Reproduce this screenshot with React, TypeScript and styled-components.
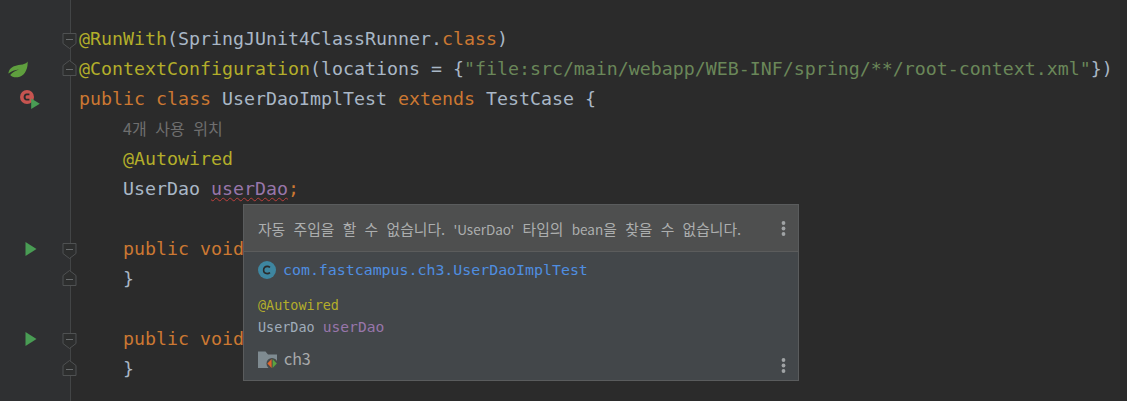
import React from "react";
import styled, { createGlobalStyle } from "styled-components";

const GlobalStyle = createGlobalStyle`
  html, body {
    margin: 0;
    padding: 0;
    background: #2b2b2b;
  }
`;

const MONO = `"DejaVu Sans Mono", "Noto Sans CJK KR", monospace`;
const SANS = `"Noto Sans CJK KR", "Noto Sans", sans-serif`;

const FoldMark = ({ end }: { end?: boolean }) => (
  <FoldIcon width="15" height="18" viewBox="0 0 15 18">
    <path
      d={end ? "M1 16.5V6.5L7.5 1.5L14 6.5V16.5Z" : "M1 1.5H14V11.5L7.5 16.5L1 11.5Z"}
      fill="#2d2e2e"
      stroke="#4f5152"
      strokeWidth="1"
    />
    <path d={end ? "M4 10.5H11" : "M4 7.5H11"} stroke="#686b6d" strokeWidth="1" />
  </FoldIcon>
);

const RunIcon = () => (
  <svg width="12" height="16" viewBox="0 0 12 16">
    <path d="M0.5 1V15L11.5 8Z" fill="#499c54" />
  </svg>
);

const SpringLeaf = () => (
  <svg width="20" height="17" viewBox="0 0 20 17">
    <path
      d="M19.6 0.4C18.2 2.6 15.6 3.4 12.4 3.8C7.4 4.4 2.6 5.8 0.8 10.4C0.5 11.2 0.4 12 0.5 12.6C3.4 10.4 7 9 11 8.6C7.4 10 4.2 11.6 2.2 14C3.6 15.8 6.6 16.6 9.8 16.2C16 15.4 20.2 8.6 19.6 0.4Z"
      fill="#5f9f3e"
    />
  </svg>
);

const ErrorClassIcon = () => (
  <svg width="20" height="19" viewBox="0 0 20 19">
    <circle cx="7" cy="7" r="7" fill="#c75450" />
    <path d="M9.4 3.4H6.6C4.8 3.4 3.6 5 3.6 7C3.6 9 4.8 10.6 6.6 10.6H9.4V8.8H6.8C6 8.8 5.6 8 5.6 7C5.6 6 6 5.2 6.8 5.2H9.4Z" fill="#2b2b2b" />
    <path d="M11.2 8.6V19L19.8 13.8Z" fill="#499c54" />
  </svg>
);

const KebabIcon = () => (
  <svg width="5" height="15" viewBox="0 0 5 15">
    <circle cx="2.5" cy="2" r="1.9" fill="#a0a3a5" />
    <circle cx="2.5" cy="7.5" r="1.9" fill="#a0a3a5" />
    <circle cx="2.5" cy="13" r="1.9" fill="#a0a3a5" />
  </svg>
);

const ClassBadge = () => (
  <svg width="18" height="18" viewBox="0 0 18 18">
    <circle cx="9" cy="9" r="9" fill="#3e86a0" />
    <path d="M12 6.4C11.2 5.7 10.3 5.4 9.2 5.4C7 5.4 5.6 6.9 5.6 9C5.6 11.1 7 12.6 9.2 12.6C10.3 12.6 11.2 12.3 12 11.6" fill="none" stroke="#2b2b2b" strokeWidth="1.6" />
  </svg>
);

const ModuleFolder = () => (
  <FolderIcon width="20" height="18" viewBox="0 0 20 18">
    <path d="M0 0.5H7.5L10 3.5H19V14H12V17H0Z" fill="#7f8b91" />
    <circle cx="14" cy="12.5" r="5.5" fill="#45494a" />
    <path d="M13.6 8V17L9.4 12.5Z" fill="#e0642a" />
    <path d="M14.6 8V17L18.8 12.5Z" fill="#5ca33f" />
  </FolderIcon>
);

type LineProps = {
  indent?: number;
  icon?: React.ReactNode;
  iconLeft?: number;
  fold?: "start" | "end";
  children?: React.ReactNode;
};

const Line = ({ indent = 0, icon, iconLeft = 0, fold, children }: LineProps) => (
  <Row>
    <Gutter $left={iconLeft}>
      {icon}
      {fold && (
        <FoldSlot $end={fold === "end"}>
          <FoldMark end={fold === "end"} />
        </FoldSlot>
      )}
    </Gutter>
    <Code $indent={indent}>{children}</Code>
  </Row>
);

const App = () => {
  return (
    <>
      <GlobalStyle />
      <Page>
        <Line fold="start">
          <Annotation>@RunWith</Annotation>(SpringJUnit4ClassRunner.<Keyword>class</Keyword>)
        </Line>
        <Line fold="end" icon={<SpringLeaf />} iconLeft={8}>
          <Annotation>@ContextConfiguration</Annotation>(locations = {"{"}
          <Str>"file:src/main/webapp/WEB-INF/spring/**/root-context.xml"</Str>
          {"})"}
        </Line>
        <Line icon={<ErrorClassIcon />} iconLeft={20}>
          <Keyword>public class</Keyword> UserDaoImplTest <Keyword>extends</Keyword> TestCase {"{"}
        </Line>
        <Line indent={44}>
          <Hint>4개 사용 위치</Hint>
        </Line>
        <Line indent={44}>
          <Annotation>@Autowired</Annotation>
        </Line>
        <Line indent={44}>
          UserDao <ErrorField>userDao</ErrorField>
          <Keyword>;</Keyword>
        </Line>
        <Line />
        <Line indent={44} fold="start" icon={<RunIcon />} iconLeft={25}>
          <Keyword>public void</Keyword>
        </Line>
        <Line indent={44} fold="end">
          {"}"}
        </Line>
        <Line />
        <Line indent={44} fold="start" icon={<RunIcon />} iconLeft={25}>
          <Keyword>public void</Keyword>
        </Line>
        <Line indent={44} fold="end">
          {"}"}
        </Line>

        <Popup>
          <PopupHeader>
            <Message>
              자동 주입을 할 수 없습니다. <Latin>'UserDao'</Latin> 타입의 <Latin>bean</Latin>을 찾을 수 없습니다.
            </Message>
            <KebabIcon />
          </PopupHeader>
          <PopupBody>
            <ClassRow>
              <ClassBadge />
              <ClassLink>com.fastcampus.ch3.UserDaoImplTest</ClassLink>
            </ClassRow>
            <Declaration>
              <Annotation>@Autowired</Annotation>
              <DeclarationLine>
                UserDao <Field>userDao</Field>
              </DeclarationLine>
            </Declaration>
            <ModuleRow>
              <ModuleFolder />
              <ModuleName>ch3</ModuleName>
              <KebabSlot>
                <KebabIcon />
              </KebabSlot>
            </ModuleRow>
          </PopupBody>
        </Popup>
      </Page>
    </>
  );
};

const Page = styled.div`
  position: relative;
  width: 1127px;
  height: 401px;
  overflow: hidden;
  padding-top: 24px;
  box-sizing: border-box;
  background: linear-gradient(
    to right,
    #2f3032 70px,
    #434546 70px,
    #434546 71px,
    #2b2b2b 71px
  );
  font-family: ${MONO};
  font-size: 18.27px;
  color: #a9b7c6;
`;

const Row = styled.div`
  display: flex;
  height: 30px;
  line-height: 30px;
  white-space: pre;
`;

const Gutter = styled.div<{ $left: number }>`
  position: relative;
  flex: none;
  display: flex;
  align-items: center;
  width: 71px;
  padding-left: ${(p) => p.$left}px;
  box-sizing: border-box;
`;

const FoldSlot = styled.div<{ $end: boolean }>`
  position: absolute;
  left: 62px;
  top: ${(p) => (p.$end ? 5 : 8)}px;
  display: flex;
`;

const FoldIcon = styled.svg`
  display: block;
`;

const FolderIcon = styled.svg`
  flex: none;
  margin-top: 8px;
`;

const Code = styled.div<{ $indent: number }>`
  padding-left: ${(p) => p.$indent + 8}px;
`;

const Annotation = styled.span`
  color: #b3ae2a;
`;

const Keyword = styled.span`
  color: #cc7832;
`;

const Str = styled.span`
  color: #6a8759;
`;

const Hint = styled.span`
  position: relative;
  top: -1px;
  font-family: ${SANS};
  font-size: 16px;
  word-spacing: 5px;
  color: #6f6f6f;
`;

const Field = styled.span`
  color: #9876aa;
`;

const ErrorField = styled(Field)`
  text-decoration: underline wavy #bc3f3c 1px;
  text-underline-offset: 2px;
`;

const Popup = styled.div`
  position: absolute;
  left: 243px;
  top: 204px;
  width: 556px;
  height: 177px;
  box-sizing: border-box;
  display: flex;
  flex-direction: column;
  border: 1px solid #5a5c5d;
  background: #43474a;
  color: #bbbbbb;
`;

const PopupHeader = styled.div`
  flex: none;
  display: flex;
  align-items: center;
  justify-content: space-between;
  height: 47px;
  padding: 0 12px 0 14px;
  box-sizing: border-box;
  border-bottom: 1px solid #5b5c5c;
  background: #4e4f4f;
`;

const Message = styled.div`
  font-family: ${SANS};
  font-size: 14.8px;
  word-spacing: 5px;
  color: #acaeae;
  white-space: pre;
`;

const Latin = styled.span`
  font-size: 13.5px;
`;

const PopupBody = styled.div`
  flex: 1;
  display: flex;
  flex-direction: column;
  padding: 0 12px 0 14px;
`;

const ClassRow = styled.div`
  display: flex;
  align-items: center;
  gap: 7px;
  height: 36px;
`;

const ClassLink = styled.span`
  font-size: 14.9px;
  color: #4f8ee0;
`;

const Declaration = styled.div`
  display: flex;
  flex-direction: column;
  margin-top: 7px;
  font-size: 13.45px;
  line-height: 21px;
`;

const DeclarationLine = styled.div`
  color: #a0adba;
  & > span {
    font-size: 14.6px;
  }
`;

const ModuleRow = styled.div`
  display: flex;
  align-items: flex-start;
  gap: 6px;
  height: 30px;
  margin-top: 5px;
`;

const ModuleName = styled.span`
  margin-top: 5px;
  font-family: ${SANS};
  font-size: 16px;
  line-height: 20px;
  color: #a8aaab;
`;

const KebabSlot = styled.div`
  margin-left: auto;
  align-self: flex-end;
  display: flex;
`;

export default App;
